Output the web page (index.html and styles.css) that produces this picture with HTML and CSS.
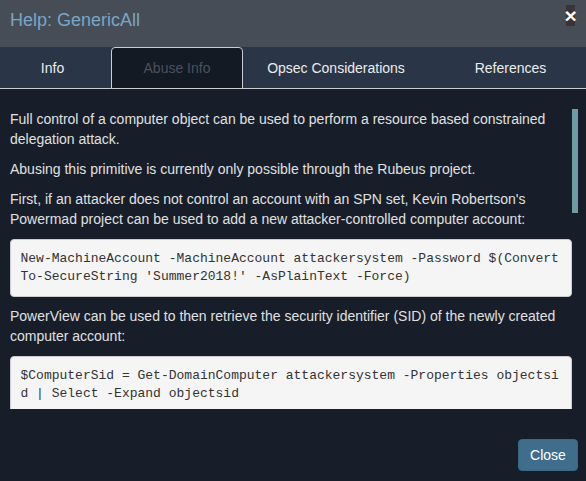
FILE: index.html
```html
<!DOCTYPE html>
<html lang="en">
<head>
<meta charset="utf-8">
<title>Help: GenericAll</title>
<link rel="stylesheet" href="styles.css">
</head>
<body>
<div class="modal">
  <header class="modal-header">
    <h4 class="modal-title">Help: GenericAll</h4>
    <button class="close" type="button" aria-label="Close">&times;</button>
  </header>
  <nav class="tabs">
    <a class="tab tab-first">Info</a>
    <a class="tab active">Abuse Info</a>
    <a class="tab">Opsec Considerations</a>
    <a class="tab tab-last">References</a>
  </nav>
  <div class="tab-body">
    <p>Full control of a computer object can be used to perform a resource based constrained delegation attack.</p>
    <p>Abusing this primitive is currently only possible through the Rubeus project.</p>
    <p>First, if an attacker does not control an account with an SPN set, Kevin Robertson's Powermad project can be used to add a new attacker-controlled computer account:</p>
    <pre class="code">New-MachineAccount -MachineAccount attackersystem -Password $(ConvertTo-SecureString 'Summer2018!' -AsPlainText -Force)</pre>
    <p>PowerView can be used to then retrieve the security identifier (SID) of the newly created computer account:</p>
    <pre class="code">$ComputerSid = Get-DomainComputer attackersystem -Properties objectsid | Select -Expand objectsid</pre>
    <div class="scroll-thumb"></div>
  </div>
  <footer class="modal-footer">
    <button class="btn" type="button">Close</button>
  </footer>
</div>
</body>
</html>
```

FILE: styles.css
```css
* { box-sizing: border-box; }

html, body {
  margin: 0;
  padding: 0;
  height: 100%;
}

body {
  background: #171e29;
  font-family: "Liberation Sans", Arial, sans-serif;
  font-size: 14px;
  line-height: 20px;
  color: #e0e0e0;
}

.modal {
  height: 481px;
  display: flex;
  flex-direction: column;
}

.modal-header {
  height: 47px;
  flex: none;
  background: #474d57;
  display: flex;
  justify-content: space-between;
  align-items: flex-start;
  padding: 7px 10px 0 10px;
}

.modal-title {
  margin: 0;
  font-size: 18px;
  font-weight: normal;
  line-height: 26px;
  color: #79a6c6;
}

.close {
  margin: -2px 1px 0 0;
  padding: 0;
  border: 0;
  width: 9px;
  height: 21px;
  background: #3a3436;
  color: #ffffff;
  font-family: "Liberation Sans", Arial, sans-serif;
  font-size: 21px;
  font-weight: bold;
  line-height: 21px;
  display: flex;
  justify-content: center;
  align-items: center;
  overflow: visible;
}

.tabs {
  flex: none;
  display: grid;
  grid-template-columns: 111px 132px 186px 1fr;
  background: #2a3547;
  border-bottom: 1px solid #c9cdd2;
}

.tab {
  display: block;
  text-align: center;
  padding: 10px 0;
  border: 1px solid transparent;
  margin-bottom: -1px;
  color: #ececec;
  line-height: 20px;
}

.tab-first {
  padding-right: 6px;
}

.tab-last {
  padding-left: 6px;
}

.tab.active {
  background: #141a24;
  border-color: #c9cdd2;
  border-radius: 4px 4px 0 0;
  color: #4a515b;
}

.tab-body {
  position: relative;
  height: 320px;
  flex: none;
  overflow: hidden;
  padding: 20px 14px 0 10px;
}

.tab-body p {
  margin: 0 0 10px;
}

.code {
  margin: 0 0 9px;
  padding: 9.5px;
  background: #f5f5f5;
  border: 1px solid #cccccc;
  border-radius: 4px;
  color: #333333;
  font-family: "Liberation Mono", "Courier New", monospace;
  font-size: 13px;
  line-height: 18.57px;
  white-space: pre-wrap;
  word-break: break-all;
}

.scroll-thumb {
  position: absolute;
  top: 20px;
  right: 8px;
  width: 6px;
  height: 104px;
  background: #6f9ca2;
}

.modal-footer {
  flex: 1;
  display: flex;
  justify-content: flex-end;
  align-items: flex-end;
  padding: 0 8px 10px 0;
}

.btn {
  width: 60px;
  height: 32px;
  padding: 0;
  border: 1px solid #3a6886;
  border-radius: 4px;
  background: #3f6e8d;
  color: #ffffff;
  font-family: "Liberation Sans", Arial, sans-serif;
  font-size: 14px;
  line-height: 20px;
}
```
